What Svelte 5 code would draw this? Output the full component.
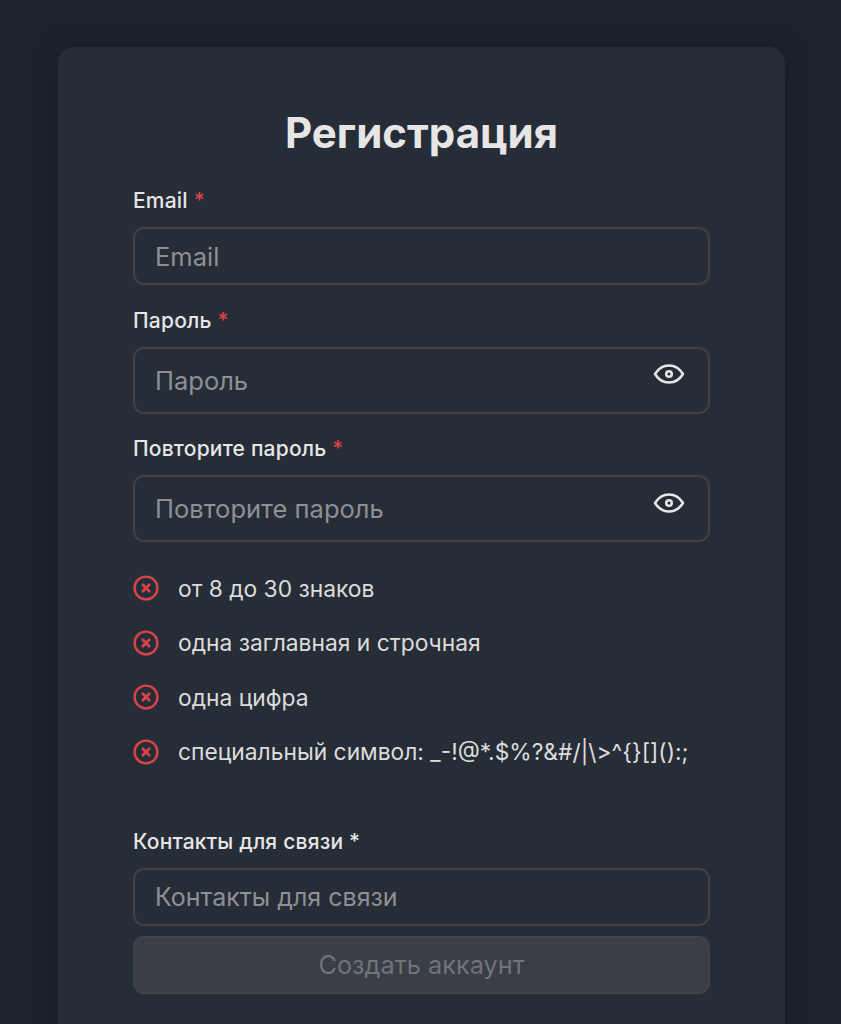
<script>
	const rules = [
		'от 8 до 30 знаков',
		'одна заглавная и строчная',
		'одна цифра',
		'специальный символ: _-!@*.$%?&#/|\\>^{}[]():;'
	];
</script>

<main class="page">
	<form class="card" onsubmit={e => e.preventDefault()}>
		<h1>Регистрация</h1>

		<label class="field-label" for="email">Email <span class="req">*</span></label>
		<div class="input short">
			<input id="email" type="text" placeholder="Email" />
		</div>

		<label class="field-label gap" for="password">Пароль <span class="req">*</span></label>
		<div class="input">
			<input id="password" type="password" placeholder="Пароль" />
			{@render eye()}
		</div>

		<label class="field-label gap" for="repeat">Повторите пароль <span class="req">*</span></label>
		<div class="input">
			<input id="repeat" type="password" placeholder="Повторите пароль" />
			{@render eye()}
		</div>

		<ul class="rules">
			{#each rules as rule}
				<li>
					<svg width="26" height="26" viewBox="0 0 26 26" fill="none" stroke="#d9434a" stroke-width="2.4" stroke-linecap="round">
						<circle cx="13" cy="13" r="11.400" />
						<path d="M9.800 9.800l6.400 6.400M16.200 9.800l-6.400 6.400" stroke-width="2.800" />
					</svg>
					<span>{rule}</span>
				</li>
			{/each}
		</ul>

		<label class="field-label" for="contacts">Контакты для связи *</label>
		<div class="input short">
			<input class="contacts" id="contacts" type="text" placeholder="Контакты для связи" />
		</div>

		<button type="submit" disabled>Создать аккаунт</button>
	</form>
</main>

{#snippet eye()}
	<svg class="eye" width="32" height="32" viewBox="0 0 32 32" fill="none" stroke="#e6e6e6" stroke-width="2.500">
		<path d="M2 16C5.500 10.300 10.300 7.500 16 7.500S26.500 10.300 30 16C26.500 21.700 21.700 24.500 16 24.500S5.500 21.700 2 16Z" stroke-linejoin="round" />
		<circle cx="16" cy="16" r="2.800" />
	</svg>
{/snippet}

<style>
	:global(body) {
		background: #1b232d;
	}

	.page {
		height: 1024px;
		overflow: hidden;
		padding: 47px 56px 0 58px;
		box-sizing: border-box;
		font-family: Inter, "Noto Sans", sans-serif;
	}

	.card {
		background: #272d37;
		border-radius: 16px;
		padding: 58px 75px 60px;
		display: flex;
		flex-direction: column;
		box-shadow: 0 0 24px rgba(16, 20, 26, 0.35);
	}

	h1 {
		margin: 0 0 27px;
		height: 56px;
		line-height: 56px;
		text-align: center;
		font-size: 42px;
		font-weight: 700;
		color: #e6e6e6;
	}

	.field-label {
		height: 26px;
		line-height: 26px;
		margin-bottom: 13px;
		font-size: 21px;
		font-weight: 500;
		letter-spacing: 0.2px;
		color: #e6e6e6;
	}

	.field-label.gap {
		margin-top: 22.500px;
	}

	.req {
		color: #d9434a;
	}

	.input {
		height: 67px;
		box-sizing: border-box;
		border: 2px solid #404146;
		border-radius: 11px;
		display: flex;
		align-items: center;
		padding: 0 23px 0 20px;
	}

	.input.short {
		height: 58px;
	}

	input {
		flex: 1;
		min-width: 0;
		border: 0;
		outline: 0;
		padding: 0;
		background: none;
		color: #e6e6e6;
		font: 400 25.500px Inter, "Noto Sans", sans-serif;
	}

	input.contacts {
		font-size: 25px;
	}

	input::placeholder {
		color: #8e9095;
		opacity: 1;
	}

	.eye {
		margin-top: -12px;
		flex: none;
	}

	.rules {
		list-style: none;
		margin: 33px 0 0;
		padding: 0 0 64px;
		display: flex;
		flex-direction: column;
		gap: 28.500px;
	}

	.rules li {
		height: 26px;
		display: flex;
		align-items: center;
		gap: 19px;
		font-size: 22.800px;
		color: #dcdcdc;
		white-space: nowrap;
	}

	button {
		margin-top: 10px;
		height: 58px;
		box-sizing: border-box;
		background: #3a3e47;
		border: 2px solid #404349;
		border-radius: 11px;
		color: #70737a;
		font: 400 25.300px Inter, "Noto Sans", sans-serif;
	}
</style>
